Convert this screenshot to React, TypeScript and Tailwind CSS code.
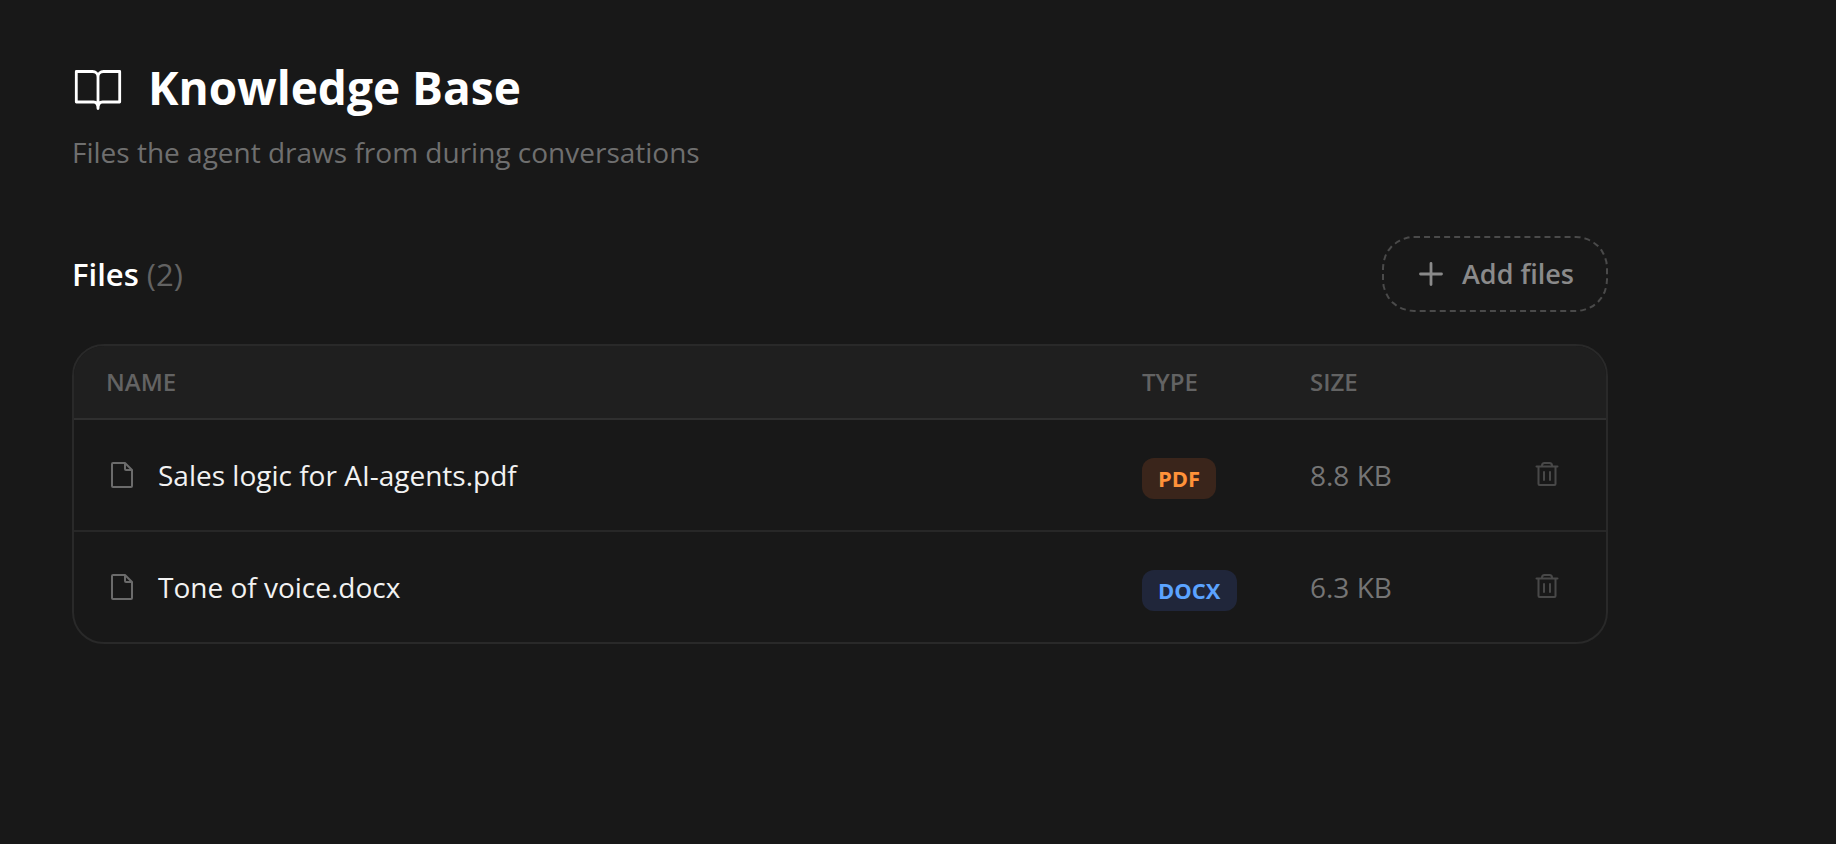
import React from "react";

type FileItem = {
  name: string;
  type: string;
  size: string;
  badge: string;
};

const files: FileItem[] = [
  {
    name: "Sales logic for AI-agents.pdf",
    type: "PDF",
    size: "8.8 KB",
    badge: "bg-[#3a251b] text-[#ff9239]",
  },
  {
    name: "Tone of voice.docx",
    type: "DOCX",
    size: "6.3 KB",
    badge: "bg-[#20263a] text-[#5ba3ff]",
  },
];

const BookIcon = () => (
  <svg
    className="size-13 shrink-0"
    viewBox="0 0 52 52"
    fill="none"
    stroke="currentColor"
    strokeWidth="2.8"
    strokeLinecap="round"
    strokeLinejoin="round"
    aria-hidden="true"
  >
    <path d="M26 16C26 12.5 23.5 10.5 20.5 10.5H4.3V41H21.5C24.5 41 26 43.5 26 47.5C26 43.5 27.5 41 30.5 41H47.7V10.5H31.5C28.5 10.5 26 12.5 26 16V47.5" />
  </svg>
);

const PlusIcon = () => (
  <svg
    className="size-[30px]"
    viewBox="0 0 30 30"
    fill="none"
    stroke="currentColor"
    strokeWidth="2.8"
    strokeLinecap="round"
    aria-hidden="true"
  >
    <path d="M15 4.5V25.5M4.5 15H25.5" />
  </svg>
);

const FileIcon = () => (
  <svg
    className="size-8 shrink-0 text-[#6b6b6b]"
    viewBox="0 0 32 32"
    fill="none"
    stroke="currentColor"
    strokeWidth="2"
    strokeLinejoin="round"
    aria-hidden="true"
  >
    <path d="M19 4H7Q6 4 6 5V27Q6 28 7 28H25Q26 28 26 27V11L19 4V10Q19 11 20 11H26" />
  </svg>
);

const TrashIcon = () => (
  <svg
    className="size-7"
    viewBox="0 0 28 28"
    fill="none"
    stroke="currentColor"
    strokeWidth="2"
    strokeLinecap="round"
    strokeLinejoin="round"
    aria-hidden="true"
  >
    <path d="M4.5 5.5H25.5M6.5 5.5V23Q6.5 24 7.5 24H22.5Q23.5 24 23.5 23V5.5M10 5.5V4.5Q10 2 12.5 2H17.5Q20 2 20 4.5V5.5M12 11V19M18 11V19" />
  </svg>
);

const App = () => {
  return (
    <div className="min-h-screen bg-[#181818] px-18 pt-14 font-['Open_Sans',sans-serif] text-white">
      <main className="max-w-[1536px]">
        <header>
          <div className="flex items-center gap-6">
            <BookIcon />
            <h1 className="text-[46px] leading-[62px] font-bold">
              Knowledge Base
            </h1>
          </div>
          <p className="mt-[14px] text-[28px] leading-10 text-[#6f6f6f]">
            Files the agent draws from during conversations
          </p>
        </header>

        <section className="mt-16">
          <div className="flex items-center justify-between">
            <h2 className="text-[31px] leading-10 font-semibold">
              Files <span className="font-normal text-[#626262]">(2)</span>
            </h2>
            <button
              type="button"
              className="flex h-19 items-center gap-4 rounded-[32px] border-2 border-dashed border-[#4a4a4a] px-8 text-[27px] font-semibold text-[#8a8a8a]"
            >
              <PlusIcon />
              Add files
            </button>
          </div>

          <div className="mt-8 overflow-hidden rounded-[32px] border-2 border-[#292929]">
            <table className="w-full table-fixed text-left">
              <thead className="bg-[#1f1f1f] text-2xl text-[#636363]">
                <tr className="h-[73px] border-b-2 border-[#2f2f2f]">
                  <th className="pl-8 font-semibold">NAME</th>
                  <th className="w-42 font-semibold">TYPE</th>
                  <th className="w-50 font-semibold">SIZE</th>
                  <th className="w-24" aria-label="Actions" />
                </tr>
              </thead>
              <tbody className="text-[28px] leading-10">
                {files.map((file) => (
                  <tr
                    key={file.name}
                    className="h-28 border-b-2 border-[#272727] last:h-[111px] last:border-b-0"
                  >
                    <td className="pl-8">
                      <div className="flex items-center gap-5 text-[#f2f2f2]">
                        <FileIcon />
                        {file.name}
                      </div>
                    </td>
                    <td className="pt-1">
                      <span
                        className={`inline-block rounded-xl px-4 text-[22px] leading-[41px] font-bold ${file.badge}`}
                      >
                        {file.type}
                      </span>
                    </td>
                    <td className="text-[#757575]">{file.size}</td>
                    <td className="pr-8">
                      <button
                        type="button"
                        aria-label={`Delete ${file.name}`}
                        className="ml-auto flex size-14 items-center justify-center text-[#484848]"
                      >
                        <TrashIcon />
                      </button>
                    </td>
                  </tr>
                ))}
              </tbody>
            </table>
          </div>
        </section>
      </main>
    </div>
  );
};

export default App;
